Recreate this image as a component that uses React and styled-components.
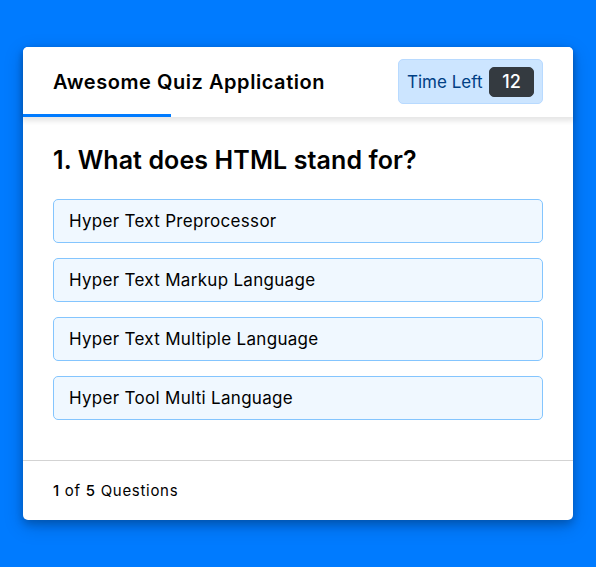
import styled, { createGlobalStyle } from "styled-components";

const GlobalStyle = createGlobalStyle`
  * {
    margin: 0;
    padding: 0;
    box-sizing: border-box;
  }
  body {
    background: #007bff;
    font-family: "Inter", "Open Sans", sans-serif;
  }
`;

const Page = styled.div`
  min-height: 100vh;
  display: flex;
  align-items: center;
  justify-content: center;
`;

const QuizBox = styled.div`
  width: 550px;
  background: #fff;
  border-radius: 5px;
  box-shadow: 0 4px 8px 0 rgba(0, 0, 0, 0.2), 0 6px 20px 0 rgba(0, 0, 0, 0.19);
`;

const Header = styled.header`
  position: relative;
  z-index: 2;
  height: 70px;
  padding: 0 30px;
  background: #fff;
  border-radius: 5px 5px 0 0;
  display: flex;
  align-items: center;
  justify-content: space-between;
  box-shadow: 0 3px 5px 1px rgba(0, 0, 0, 0.1);
`;

const Title = styled.div`
  font-size: 20px;
  font-weight: 600;
  color: #000;
  letter-spacing: 0.55px;
`;

const Timer = styled.div`
  height: 45px;
  width: 145px;
  padding: 0 8px;
  display: flex;
  align-items: center;
  justify-content: space-between;
  background: #cce5ff;
  border: 1px solid #b8daff;
  border-radius: 5px;
`;

const TimeText = styled.div`
  font-size: 17px;
  font-weight: 400;
  color: #004085;
  user-select: none;
`;

const TimeSec = styled.div`
  height: 30px;
  width: 45px;
  font-size: 18px;
  font-weight: 500;
  line-height: 28px;
  text-align: center;
  color: #fff;
  background: #343a40;
  border: 1px solid #343a40;
  border-radius: 5px;
`;

const TimeLine = styled.div`
  position: absolute;
  bottom: 0;
  left: 0;
  height: 3px;
  background: #007bff;
`;

const Section = styled.section`
  padding: 25px 30px 20px;
`;

const Question = styled.div`
  font-size: 25px;
  font-weight: 600;
  line-height: 37.5px;
  letter-spacing: 0.1px;
  color: #000;
`;

const OptionList = styled.div`
  padding: 20px 0;
  display: flex;
  flex-direction: column;
  gap: 15px;
`;

const Option = styled.div`
  background: aliceblue;
  border: 1px solid #84c5fe;
  border-radius: 5px;
  padding: 8px 15px;
  font-size: 17px;
  line-height: 26px;
  letter-spacing: 0.3px;
  color: #000;
  cursor: pointer;
`;

const Footer = styled.footer`
  height: 60px;
  padding: 0 30px;
  border-top: 1px solid lightgrey;
  display: flex;
  align-items: center;
`;

const Total = styled.span`
  font-size: 15px;
  letter-spacing: 0.7px;
  color: #000;

  b {
    font-weight: 500;
  }
`;

const options = [
  "Hyper Text Preprocessor",
  "Hyper Text Markup Language",
  "Hyper Text Multiple Language",
  "Hyper Tool Multi Language",
];

const App = () => (
  <>
    <GlobalStyle />
    <Page>
      <QuizBox>
        <Header>
          <Title>Awesome Quiz Application</Title>
          <Timer>
            <TimeText>Time Left</TimeText>
            <TimeSec>12</TimeSec>
          </Timer>
          <TimeLine style={{ width: 148 }} />
        </Header>
        <Section>
          <Question>1. What does HTML stand for?</Question>
          <OptionList>
            {options.map(o => (
              <Option key={o}>{o}</Option>
            ))}
          </OptionList>
        </Section>
        <Footer>
          <Total>
            <b>1</b> of <b>5</b> Questions
          </Total>
        </Footer>
      </QuizBox>
    </Page>
  </>
);

export default App;
